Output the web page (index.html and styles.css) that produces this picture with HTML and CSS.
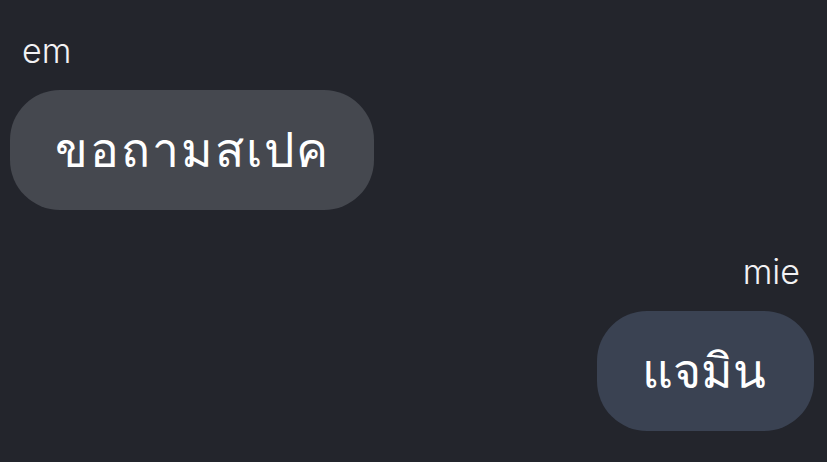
FILE: index.html
```html
<!DOCTYPE html>
<html lang="th">
<head>
<meta charset="utf-8">
<link rel="stylesheet" href="styles.css">
</head>
<body>
<div class="chat">
  <div class="msg msg-left">
    <div class="name">em</div>
    <div class="bubble bubble-gray">ขอถามสเปค</div>
  </div>
  <div class="msg msg-right">
    <div class="name">mie</div>
    <div class="bubble bubble-blue">แจมิน</div>
  </div>
</div>
</body>
</html>
```
FILE: styles.css
```css
html, body {
  margin: 0;
  padding: 0;
  background: #23252c;
  width: 827px;
  height: 462px;
  overflow: hidden;
}
.chat {
  display: flex;
  flex-direction: column;
  padding: 34px 13px 0 10px;
  font-family: "Noto Sans", "Liberation Sans", sans-serif;
  color: #ffffff;
}
.msg {
  display: flex;
  flex-direction: column;
}
.msg-left {
  align-items: flex-start;
}
.msg-right {
  align-items: flex-end;
  margin-top: 45px;
}
.name {
  font-family: Inter, "Liberation Sans", sans-serif;
  font-size: 34px;
  line-height: 34px;
  font-weight: 300;
  color: #f2f2f4;
  padding: 0 14px 0 12px;
}
.bubble {
  height: 120px;
  box-sizing: border-box;
  border-radius: 50px;
  display: flex;
  align-items: center;
  justify-content: center;
  font-size: 48px;
  font-weight: 300;
  margin-top: 22px;
}
.bubble-gray {
  background: #45484f;
  width: 364px;
  letter-spacing: 2px;
}
.bubble-blue {
  background: #3a4252;
  width: 217px;
  padding-right: 3px;
}
```
